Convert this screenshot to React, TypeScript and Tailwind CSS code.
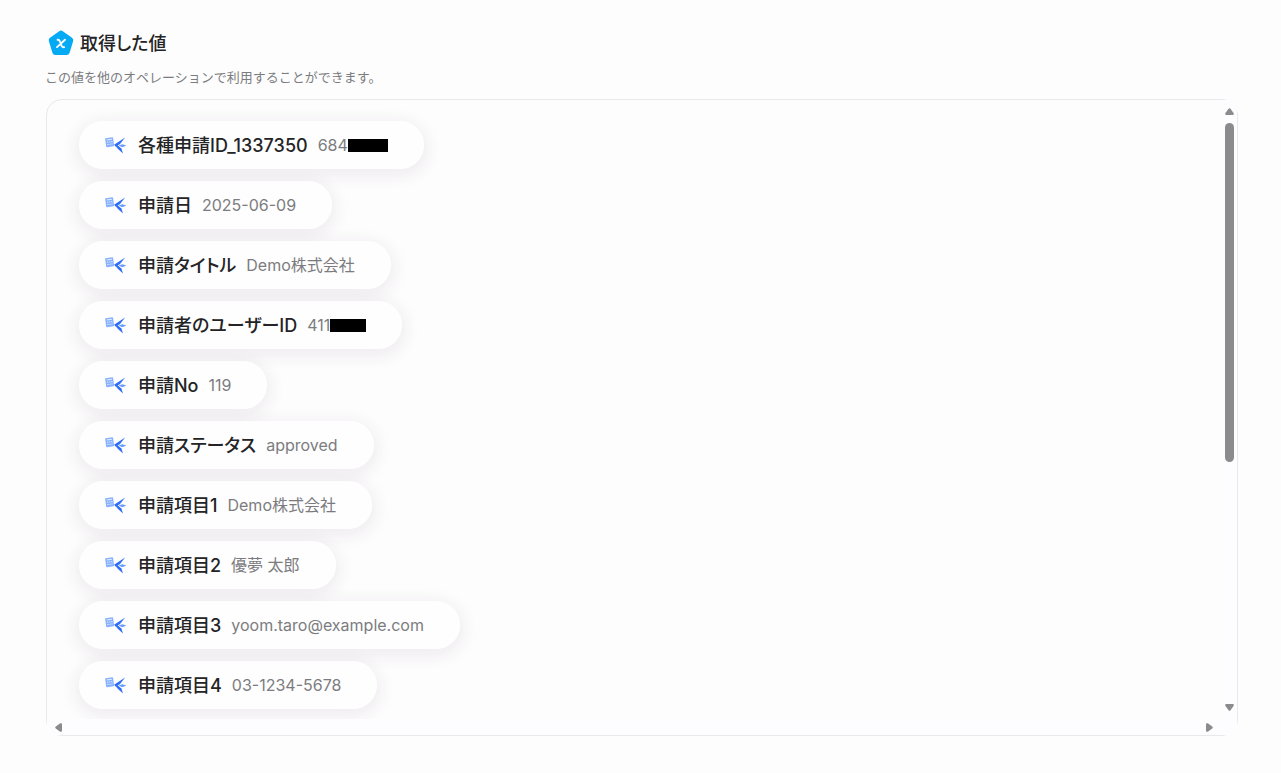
import React from 'react';

interface Item {
  label: string;
  value: string;
  mask?: string;
}

const ITEMS: Item[] = [
  { label: '各種申請ID_1337350', value: '684', mask: 'w-10' },
  { label: '申請日', value: '2025-06-09' },
  { label: '申請タイトル', value: 'Demo株式会社' },
  { label: '申請者のユーザーID', value: '411', mask: 'w-9' },
  { label: '申請No', value: '119' },
  { label: '申請ステータス', value: 'approved' },
  { label: '申請項目1', value: 'Demo株式会社' },
  { label: '申請項目2', value: '優夢 太郎' },
  { label: '申請項目3', value: 'yoom.taro@example.com' },
  { label: '申請項目4', value: '03-1234-5678' },
];

const HeadingIcon = () => (
  <svg width="26" height="26" viewBox="0 0 26 26" aria-hidden="true">
    <path
      d="M11.2 1.2Q13 0 14.8 1.2L24 7.8Q25.8 9.2 25.1 11.3L21.6 22.8Q20.9 25 18.6 25H7.4Q5.1 25 4.4 22.8L.9 11.3Q.2 9.2 2 7.8Z"
      fill="#05aaf5"
    />
    <path
      d="M9.6 9.8Q11.2 9.6 11.9 11.5L13.5 15.7Q14.3 17.5 16.2 17.1M17 9.8L9 17.1"
      fill="none"
      stroke="#fff"
      strokeWidth="1.9"
      strokeLinecap="round"
    />
  </svg>
);

const ItemIcon = () => (
  <svg width="22" height="18" viewBox="0 0 22 18" className="shrink-0" aria-hidden="true">
    <g transform="rotate(-8 5 6)">
      <rect x=".6" y="1.6" width="8" height="9.2" rx=".8" fill="#86b0ff" />
      <path d="M2 3.5h5.2" stroke="#e4eeff" strokeWidth="1" />
      <path d="M2 5.9h1.4M4.2 5.9h1.2M6.2 5.9h1.2M2 8.2h1.4M4.2 8.2h1.2M6.2 8.2h1.2" stroke="#e4eeff" strokeWidth=".9" />
    </g>
    <path d="M20.2 1.6L9.4 8.4L10.4 10.4L14.8 8.2Z" fill="#2f6df6" />
    <path d="M9.4 8.6L12 8.8L16.4 12.6L18 17.4L13 13Z" fill="#2f6df6" />
    <path d="M13.5 9.4L17.4 8.2L21.4 9.5L17.4 11.2Z" fill="#6b9fff" />
  </svg>
);

const arrow = 'block fill-[#8b8b8d]';

const App: React.FC = () => {
  return (
    <main
      lang="ja"
      className="min-h-screen bg-[#fdfdfd] px-[45px] pt-[30px] pb-9 font-['Inter','Noto_Sans_CJK_JP',sans-serif] text-[#242426]"
    >
      <header>
        <h1 className="flex h-[26px] items-center gap-1.5 pl-[3px] text-[18px] font-medium [font-feature-settings:'palt']">
          <HeadingIcon />
          取得した値
        </h1>
        <p className="mt-[11px] text-[13px] leading-5 text-[#7c7c80]">
          この値を他のオペレーションで利用することができます。
        </p>
      </header>

      <section className="mt-3 mr-[-2px] ml-px flex h-[637px] flex-col rounded-2xl border border-[#e9e8ea] bg-[#fefdfe]">
        <div className="flex min-h-0 flex-1">
          <ul className="isolate flex min-w-0 flex-1 flex-col items-start gap-3 overflow-hidden rounded-tl-2xl pt-[21px] pl-8 [font-feature-settings:'palt']">
            {ITEMS.map((item) => (
              <li
                key={item.label}
                className="relative flex h-12 shrink-0 items-center rounded-full bg-[#fefefe] pr-9 pl-[26px]"
              >
                {/* kept under every pill so it never tints a neighbour */}
                <span className="absolute inset-0 -z-10 rounded-full shadow-[0_4px_16px_4px_rgba(40,30,45,0.07)]" />
                <ItemIcon />
                <span className="ml-[11px] text-[18px] font-medium">{item.label}</span>
                <span className="ml-2.5 flex items-center text-[16px] text-[#7c7c80]">
                  {item.value}
                  {item.mask && <span className={`h-[13px] bg-black ${item.mask}`} />}
                </span>
              </li>
            ))}
          </ul>
          <div className="flex w-4 flex-col items-center justify-between bg-[#fdfcfe] py-2">
            <div className="flex flex-col items-center gap-2">
              <svg width="9" height="7" viewBox="0 0 9 7" className={arrow}>
                <path d="M3.5.8Q4.5-.4 5.5.8L8.7 5.2Q9.2 7 7.8 7H1.2Q-.2 7 .3 5.2Z" />
              </svg>
              <div className="h-[339px] w-[9px] rounded-full bg-[#8b8b8d]" />
            </div>
            <svg width="9" height="7" viewBox="0 0 9 7" className={arrow}>
              <path d="M3.5 6.2Q4.5 7.4 5.5 6.2L8.7 1.8Q9.2 0 7.8 0H1.2Q-.2 0 .3 1.8Z" />
            </svg>
          </div>
        </div>
        <div className="flex h-4 shrink-0 items-center justify-between bg-[#fdfcfe] pr-6 pl-2">
          <svg width="7" height="9" viewBox="0 0 7 9" className={arrow}>
            <path d="M.8 3.5Q-.4 4.5.8 5.5L5.2 8.7Q7 9.2 7 7.8V1.2Q7-.2 5.2.3Z" />
          </svg>
          <svg width="7" height="9" viewBox="0 0 7 9" className={arrow}>
            <path d="M6.2 3.5Q7.4 4.5 6.2 5.5L1.8 8.7Q0 9.2 0 7.8V1.2Q0-.2 1.8.3Z" />
          </svg>
        </div>
      </section>
    </main>
  );
};

export default App;
